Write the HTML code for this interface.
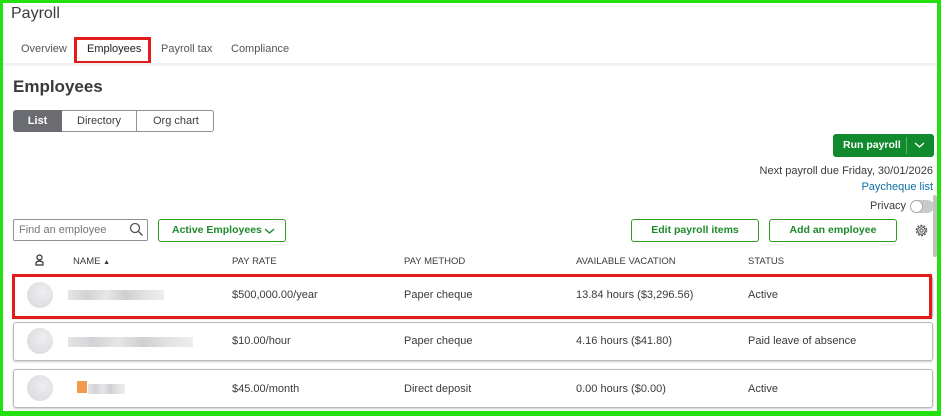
<!DOCTYPE html>
<html><head><meta charset="utf-8"><style>
*{box-sizing:border-box;margin:0;padding:0}
body{width:941px;height:416px;overflow:hidden;background:#fff;font-family:"Liberation Sans",sans-serif;color:#393a3d;position:relative}
.a{position:absolute;white-space:nowrap}
.frame{position:absolute;left:0;top:0;width:941px;height:416px;border:3px solid #22e10e;border-right-width:4px;border-bottom-width:5px;pointer-events:none;z-index:10}
.t{font-size:11px;color:#393a3d}
.h{font-size:9.5px;color:#393a3d}
.row{position:absolute;left:13px;width:920px;border:1px solid #b9babd;border-radius:3px;box-shadow:0 1px 2px rgba(0,0,0,.2);background:#fff}
.btn{position:absolute;border:1px solid #2ca01c;border-radius:3px;color:#1e8a2c;font-weight:bold;font-size:10.5px;text-align:center;background:#fff}
.av{position:absolute;width:26px;height:26px;border-radius:50%;background:radial-gradient(circle at 60% 40%,#eeeef0,#d6d7da)}
.blur{position:absolute;height:10px;background:linear-gradient(90deg,#e4e4e6,#d3d3d6 20%,#e6e6e8 40%,#cfcfd2 60%,#e2e2e4 80%,#ededef)}
</style></head><body>
<div class="frame"></div>
<div class="a" style="left:11px;top:5px;font-size:16px;color:#393a3d">Payroll</div>
<div class="a t" style="left:21px;top:43px;color:#555">Overview</div>
<div class="a" style="left:74px;top:37px;width:77px;height:27px;border:3px solid #e31b1b"></div>
<div class="a t" style="left:87px;top:43px;color:#222">Employees</div>
<div class="a t" style="left:161px;top:43px;color:#555">Payroll tax</div>
<div class="a t" style="left:231px;top:43px;color:#555">Compliance</div>
<div class="a" style="left:3px;top:63px;width:934px;height:3px;background:#f1f1f2"></div>
<div class="a" style="left:13px;top:77px;font-size:17px;font-weight:bold;color:#393a3d">Employees</div>
<div class="a" style="left:13px;top:110px;width:201px;height:22px;border:1px solid #8d9096;border-radius:3px"></div>
<div class="a" style="left:13px;top:110px;width:49px;height:22px;background:#6b6c72;border-radius:3px 0 0 3px;color:#fff;font-size:11px;font-weight:bold;text-align:center;line-height:22px">List</div>
<div class="a" style="left:136px;top:110px;width:1px;height:22px;background:#8d9096"></div>
<div class="a t" style="left:77px;top:115px">Directory</div>
<div class="a t" style="left:153px;top:115px">Org chart</div>
<div class="a" style="left:833px;top:134px;width:101px;height:23px;background:#108a2c;border-radius:3px"></div>
<div class="a" style="left:906px;top:137px;width:1px;height:17px;background:#5cb06d"></div>
<div class="a" style="left:843px;top:139px;color:#fff;font-size:10.5px;font-weight:bold">Run payroll</div>
<svg class="a" style="left:914px;top:141px" width="11" height="8"><path d="M1 2l4.5 4 4.5-4" stroke="#fff" stroke-width="1.4" fill="none"/></svg>
<div class="a t" style="right:8px;top:165px">Next payroll due Friday, 30/01/2026</div>
<div class="a" style="right:8px;top:181px;font-size:11px;color:#0d6ea6">Paycheque list</div>
<div class="a t" style="left:870px;top:200px">Privacy</div>
<div class="a" style="left:910px;top:200px;width:24px;height:13px;border-radius:7px;background:#c9cacd"></div>
<div class="a" style="left:910px;top:200px;width:13px;height:13px;border-radius:50%;background:#fff;border:1px solid #aaa"></div>
<div class="a" style="left:933px;top:195px;width:4px;height:62px;background:#c1c1c1;border-radius:2px"></div>
<div class="a" style="left:13px;top:219px;width:135px;height:22px;border:1px solid #8d9096;border-radius:2px"></div>
<div class="a" style="left:19px;top:224px;font-size:11px;color:#777">Find an employee</div>
<svg class="a" style="left:129px;top:222px" width="15" height="15"><circle cx="6" cy="6" r="4.5" stroke="#555" stroke-width="1.3" fill="none"/><path d="M9.5 9.5l4 4" stroke="#555" stroke-width="1.4"/></svg>
<div class="btn" style="left:158px;top:219px;width:128px;height:23px;line-height:21px;text-align:left;padding-left:13px">Active Employees</div>
<svg class="a" style="left:264px;top:227px" width="11" height="8"><path d="M1 2l4.5 4 4.5-4" stroke="#1e8a2c" stroke-width="1.4" fill="none"/></svg>
<div class="btn" style="left:631px;top:219px;width:128px;height:23px;line-height:21px">Edit payroll items</div>
<div class="btn" style="left:769px;top:219px;width:128px;height:23px;line-height:21px">Add an employee</div>
<svg class="a" style="left:914px;top:223px" width="15" height="15" viewBox="0 0 16 16"><circle cx="8" cy="8" r="5.5" stroke="#555" stroke-width="1.3" fill="none" stroke-dasharray="2.2 1.3"/><circle cx="8" cy="8" r="4" stroke="#555" stroke-width="1.2" fill="none"/><circle cx="8" cy="8" r="1.8" stroke="#555" stroke-width="1.1" fill="none"/></svg>
<svg class="a" style="left:35px;top:254px" width="9" height="12"><circle cx="4.5" cy="3.5" r="2.5" stroke="#333" stroke-width="1.2" fill="none"/><path d="M1 11V8.5Q4.5 5.5 8 8.5V11Z" stroke="#333" stroke-width="1.2" fill="none"/></svg>
<div class="a h" style="left:73px;top:256px">NAME <span style="font-size:7px">▲</span></div>
<div class="a h" style="left:232px;top:256px">PAY RATE</div>
<div class="a h" style="left:404px;top:256px">PAY METHOD</div>
<div class="a h" style="left:576px;top:256px">AVAILABLE VACATION</div>
<div class="a h" style="left:748px;top:256px">STATUS</div>

<div class="row" style="top:276px;height:42px"></div>
<div class="a" style="left:12px;top:274px;width:920px;height:45px;border:3px solid #e31b1b"></div>
<div class="av" style="left:27px;top:282px"></div>
<div class="blur" style="left:68px;top:290px;width:96px"></div>
<div class="a t" style="left:232px;top:289px">$500,000.00/year</div>
<div class="a t" style="left:404px;top:289px">Paper cheque</div>
<div class="a t" style="left:576px;top:289px">13.84 hours ($3,296.56)</div>
<div class="a t" style="left:748px;top:289px">Active</div>

<div class="row" style="top:322px;height:39px"></div>
<div class="av" style="left:27px;top:328px"></div>
<div class="blur" style="left:68px;top:337px;width:125px"></div>
<div class="a t" style="left:232px;top:335px">$10.00/hour</div>
<div class="a t" style="left:404px;top:335px">Paper cheque</div>
<div class="a t" style="left:576px;top:335px">4.16 hours ($41.80)</div>
<div class="a t" style="left:748px;top:335px">Paid leave of absence</div>

<div class="row" style="top:369px;height:39px"></div>
<div class="av" style="left:27px;top:375px"></div>
<div class="a" style="left:77px;top:381px;width:10px;height:12px;background:#f39a4c"></div>
<div class="blur" style="left:88px;top:384px;width:37px"></div>
<div class="a t" style="left:232px;top:383px">$45.00/month</div>
<div class="a t" style="left:404px;top:383px">Direct deposit</div>
<div class="a t" style="left:576px;top:383px">0.00 hours ($0.00)</div>
<div class="a t" style="left:748px;top:383px">Active</div>
</body></html>
